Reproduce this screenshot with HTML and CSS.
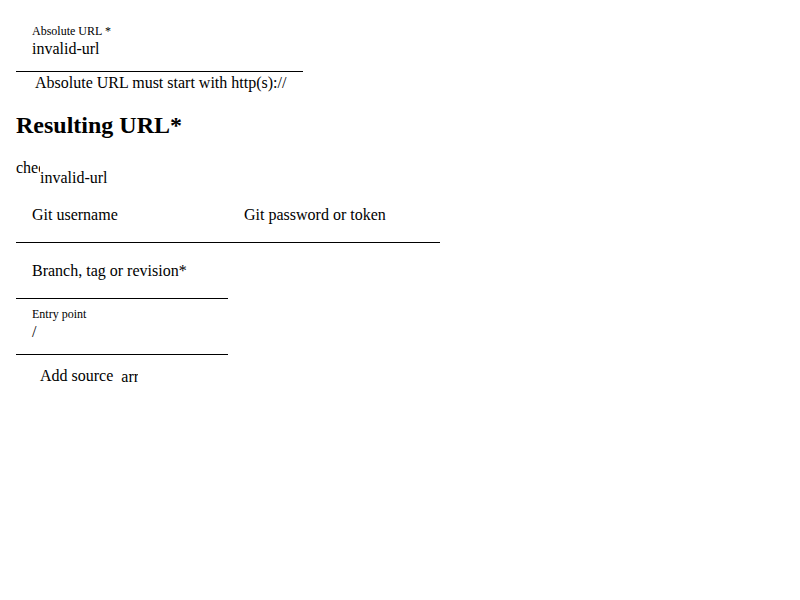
FILE: index.html
```html
<!DOCTYPE html>
<html>
<head>
<meta charset="utf-8">
<link rel="stylesheet" href="styles.css">
</head>
<body>
<form class="page">
  <div class="field field-url">
    <label class="label label-small">Absolute URL *</label>
    <div class="value">invalid-url</div>
  </div>
  <p class="helper">Absolute URL must start with http(s)://</p>

  <h2 class="title">Resulting URL*</h2>
  <div class="result">
    <span class="icon icon-check">check</span>
    <span class="result-text">invalid-url</span>
  </div>

  <div class="row">
    <div class="field field-empty"><label class="label">Git username</label></div>
    <div class="field field-empty"><label class="label">Git password or token</label></div>
  </div>

  <div class="field field-empty field-narrow"><label class="label">Branch, tag or revision*</label></div>

  <div class="field field-narrow">
    <label class="label label-small">Entry point</label>
    <div class="value">/</div>
  </div>

  <button type="button" class="add-btn">Add source<span class="icon icon-arrow">arrow_drop_down</span></button>
</form>
</body>
</html>
```

FILE: styles.css
```css
html, body {
  margin: 0;
  padding: 0;
  background: #fff;
}

body {
  font-family: "Liberation Serif", "Times New Roman", serif;
  font-size: 16px;
  color: #000;
}

.page {
  padding: 16px;
}

.field {
  box-sizing: border-box;
  width: 212px;
  height: 56px;
  padding: 8px 0 0 16px;
  border-bottom: 1px solid #000;
}

.field-url {
  width: 287px;
}

.label {
  display: block;
  font-size: 16px;
}

.label-small {
  font-size: 12px;
  line-height: 14px;
}

.value {
  margin-top: 2px;
  line-height: 18px;
}

.field-empty {
  display: flex;
  align-items: center;
  padding-top: 0;
}

.helper {
  margin: 2px 0 0;
  padding-left: 19px;
  line-height: 18px;
}

.title {
  font-size: 24px;
  font-weight: bold;
  margin: 20px 0;
  line-height: 27px;
}

.result {
  display: flex;
  align-items: flex-start;
  height: 28px;
}

.icon {
  display: inline-block;
  overflow: hidden;
  white-space: nowrap;
  line-height: 18px;
}

.icon-check {
  width: 24px;
  flex: none;
}

.result-text {
  margin-top: 10px;
  line-height: 18px;
}

.row {
  display: flex;
  width: 424px;
}

.add-btn {
  display: flex;
  align-items: flex-start;
  gap: 8px;
  border: 0;
  background: none;
  padding: 12px 0 0 24px;
  margin: 0;
  font-family: inherit;
  font-size: 16px;
  color: #000;
  line-height: 18px;
}

.icon-arrow {
  width: 17px;
  margin-top: 1px;
}
```
